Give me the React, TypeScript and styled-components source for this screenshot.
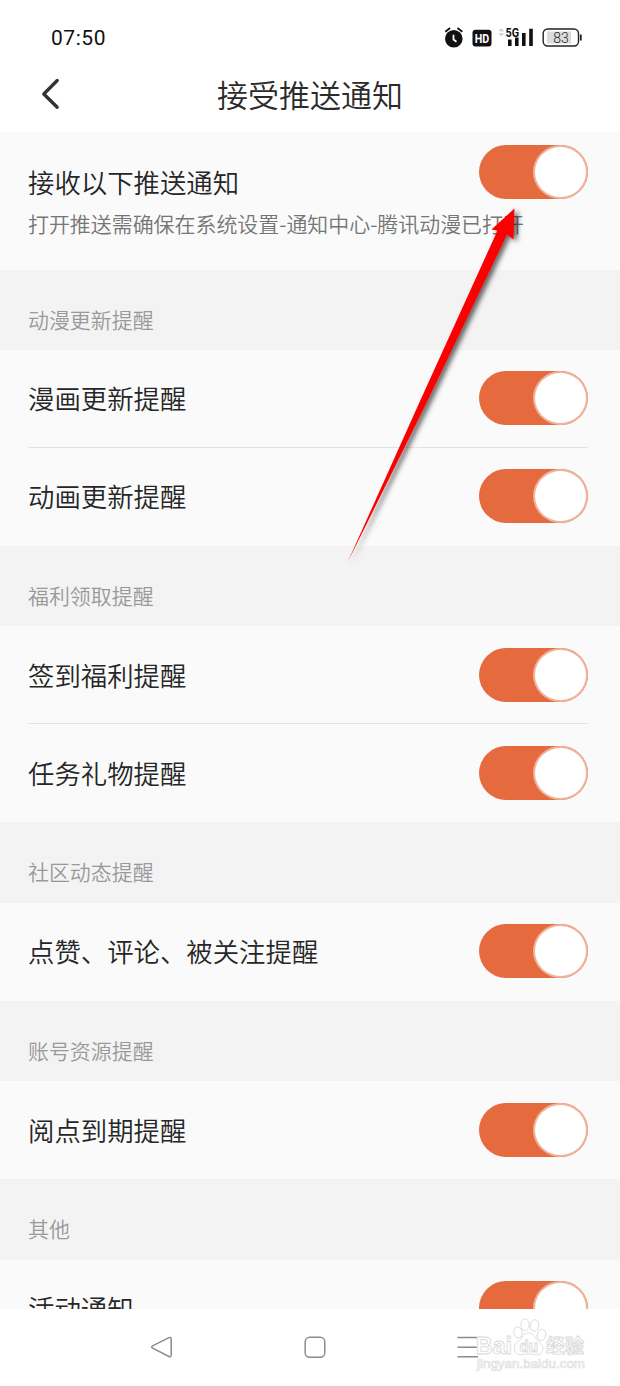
import React from 'react';
import styled, { createGlobalStyle } from 'styled-components';

const Global = createGlobalStyle`
  * { box-sizing: border-box; }
  body { margin: 0; background: #fff; font-family: "Noto Sans CJK SC", sans-serif; font-weight: 350; }
`;

const Screen = styled.div`
  position: relative;
  width: 620px;
  height: 1386px;
  overflow: hidden;
  display: flex;
  flex-direction: column;
  background: #fff;
`;

const StatusBar = styled.div`
  height: 74px;
  flex: none;
  display: flex;
  justify-content: space-between;
  padding: 0 38px 0 51px;
`;

const Clock = styled.span`
  font: 400 21px/76px Roboto, sans-serif;
  letter-spacing: 0.55px;
  color: #111;
`;

const StatusIcons = styled.svg`
  display: block;
  width: 140px;
  height: 74px;
  font-family: Roboto, sans-serif;
`;

const TitleBar = styled.header`
  height: 58px;
  flex: none;
  display: grid;
  grid-template-columns: 80px 1fr 80px;
`;

const BackIcon = styled.svg`
  width: 80px;
  height: 58px;
`;

const Title = styled.h1`
  margin: 0;
  text-align: center;
  font-size: 31px;
  line-height: 40px;
  font-weight: 350;
  color: #2b2b2b;
`;

const Content = styled.main`
  height: 1177px;
  flex: none;
  overflow: hidden;
  background: #fafafa;
`;

const Master = styled.section`
  height: 137.6px;
  display: flex;
  justify-content: space-between;
  padding: 13px 32px 0 28px;
`;

const MasterText = styled.div`
  width: 451px;
  padding-top: 17px;
`;

const Label = styled.div`
  font-size: 26.4px;
  line-height: 40px;
  color: #262626;
  white-space: nowrap;
`;

const Hint = styled.div`
  margin-top: 6px;
  font-size: 20.95px;
  line-height: 30px;
  color: #757575;
  white-space: nowrap;
`;

const GroupTitle = styled.h2`
  margin: 0;
  height: 80.4px;
  padding: 19px 28px 0;
  background: #f3f3f3;
  font-size: 20.95px;
  line-height: 60px;
  font-weight: 350;
  color: #999;
`;

const Row = styled.div<{ $divided?: boolean }>`
  height: 98px;
  margin: 0 32px 0 28px;
  display: flex;
  align-items: center;
  justify-content: space-between;
  border-bottom: 1px solid ${(p) => (p.$divided ? '#e2e2e2' : 'transparent')};
`;

const Track = styled.div`
  width: 109px;
  height: 54px;
  flex: none;
  display: flex;
  justify-content: flex-end;
  border-radius: 27px;
  background: #e56b3e;
`;

const Knob = styled.div`
  width: 55px;
  height: 54px;
  border: 2px solid #f0b49c;
  border-radius: 50%;
  background: #fff;
`;

const Toggle = () => (
  <Track role="switch" aria-checked="true">
    <Knob />
  </Track>
);

const NavBar = styled.nav`
  height: 77px;
  flex: none;
  background: #fff;
`;

const NavIcons = styled.svg`
  display: block;
  width: 620px;
  height: 77px;
`;

const Pointer = styled.svg`
  position: absolute;
  left: 330px;
  top: 190px;
  width: 220px;
  height: 390px;
  pointer-events: none;
`;

const groups = [
  { title: '动漫更新提醒', rows: ['漫画更新提醒', '动画更新提醒'] },
  { title: '福利领取提醒', rows: ['签到福利提醒', '任务礼物提醒'] },
  { title: '社区动态提醒', rows: ['点赞、评论、被关注提醒'] },
  { title: '账号资源提醒', rows: ['阅点到期提醒'] },
  { title: '其他', rows: ['活动通知'] },
];

export default function App() {
  return (
    <Screen>
      <Global />
      <StatusBar>
        <Clock>07:50</Clock>
        <StatusIcons viewBox="442 0 140 74">
          <circle cx="453.8" cy="38.8" r="8.8" fill="#111" />
          <path d="M445.3 31.8l4.8-3.8M462.3 31.8l-4.8-3.8" stroke="#111" strokeWidth="1.8" />
          <path d="M453.5 34.8v4.7l3 2.2" fill="none" stroke="#fff" strokeWidth="1.8" />
          <rect x="472.5" y="29.8" width="19" height="16.6" rx="3" fill="#111" />
          <text x="482" y="43.2" textAnchor="middle" fontSize="13.5" fontWeight="700" fill="#fff" textLength="14.5" lengthAdjust="spacingAndGlyphs">HD</text>
          <path d="M498.5 31.2l2.8-3 2.8 3zM498.5 33.2l2.8 3 2.8-3z" fill="#ccc" />
          <path d="M508 39.5h3.6V46H508zM515 37.5h3.6V46H515zM522 33h3.6v13H522zM529.2 28.8h3.6V46h-3.6z" fill="#111" />
          <text x="505.6" y="36.5" fontSize="13.2" fontWeight="700" fill="#111" textLength="13.6" lengthAdjust="spacingAndGlyphs">5G</text>
          <rect x="547" y="31.5" width="24" height="12" fill="#dcdcdc" />
          <rect x="543.2" y="29" width="35.3" height="17" rx="4.5" fill="none" stroke="#222" strokeWidth="1.4" />
          <path d="M580.8 34.5v6" stroke="#222" strokeWidth="1.8" />
          <text x="561" y="42.6" textAnchor="middle" fontSize="14" fontWeight="300" fill="#222">83</text>
        </StatusIcons>
      </StatusBar>
      <TitleBar>
        <BackIcon viewBox="0 74 80 58">
          <path d="M57.2 80.5L43.8 94l13.4 13.2" fill="none" stroke="#333" strokeWidth="3.3" strokeLinecap="round" strokeLinejoin="round" />
        </BackIcon>
        <Title>接受推送通知</Title>
      </TitleBar>
      <Content>
        <Master>
          <MasterText>
            <Label>接收以下推送通知</Label>
            <Hint>打开推送需确保在系统设置-通知中心-腾讯动漫已打开</Hint>
          </MasterText>
          <Toggle />
        </Master>
        {groups.map((g) => (
          <section key={g.title}>
            <GroupTitle>{g.title}</GroupTitle>
            {g.rows.map((r, i) => (
              <Row key={r} $divided={i < g.rows.length - 1}>
                <Label>{r}</Label>
                <Toggle />
              </Row>
            ))}
          </section>
        ))}
      </Content>
      <NavBar>
        <NavIcons viewBox="0 1309 620 77">
          <g fill="none" stroke="#8c8c8c" strokeWidth="1.5" strokeLinejoin="round">
            <path d="M152.6 1345.8L169 1337.6Q171.2 1336.8 171.2 1339V1355Q171.2 1357.4 169 1356.5L152.6 1348.2Q150.8 1347 152.6 1345.8Z" />
            <rect x="305.2" y="1337.2" width="19.6" height="20" rx="4.5" />
            <path d="M457.5 1337.5H477M457.5 1347.2H477M457.5 1356.8H478" />
          </g>
          <g fill="#fff" stroke="#d9d9d9" strokeWidth="0.9">
            <ellipse cx="518" cy="1332.5" rx="4.2" ry="5.6" transform="rotate(-14 518 1332.5)" />
            <ellipse cx="525" cy="1324.8" rx="4.2" ry="5.8" />
            <ellipse cx="534.5" cy="1325.5" rx="4.3" ry="5.8" transform="rotate(10 534.5 1325.5)" />
            <ellipse cx="541.5" cy="1335" rx="4.2" ry="5.8" transform="rotate(16 541.5 1335)" />
            <path d="M528.5 1333C523 1333 522.500 1337.500 519.500 1340.500C516 1343.500 513.500 1345.500 514.500 1350C515.500 1354.500 519 1355 522.500 1354.500C526.500 1353.800 530.500 1353.800 534.500 1354.500C538 1355 541.800 1354.500 542.800 1350C543.500 1345.500 541 1343.500 537.500 1340.500C534.500 1337.500 534 1333 528.500 1333Z" />
          </g>
          <g fontFamily="'Liberation Sans', 'Noto Sans CJK SC', sans-serif" fontWeight="700" fill="#fff" stroke="#d9d9d9" strokeWidth="0.9">
            <text x="476" y="1353.5" fontSize="24" textLength="36" lengthAdjust="spacingAndGlyphs">Bai</text>
            <text x="519.5" y="1352" fontSize="16" textLength="18.5" lengthAdjust="spacingAndGlyphs">du</text>
            <text x="546" y="1353" fontSize="19">经验</text>
            <text x="477" y="1367.5" fontSize="12.5" fontWeight="400" stroke="#e0e0e0" strokeWidth="0.7" textLength="108" lengthAdjust="spacingAndGlyphs">jingyan.baidu.com</text>
          </g>
        </NavIcons>
      </NavBar>
      <Pointer viewBox="330 190 220 390">
        <defs>
          <filter id="shade" x="-20%" y="-20%" width="150%" height="150%">
            <feDropShadow dx="3.5" dy="2" stdDeviation="2.5" floodColor="#000" floodOpacity="0.6" />
          </filter>
        </defs>
        <path d="M514.5 208.5L513.5 239.5 507 234.5 428 400 347.5 562.5 420.5 400 497.5 230.5 491.5 229.5Z" fill="#fb0303" filter="url(#shade)" />
      </Pointer>
    </Screen>
  );
}
